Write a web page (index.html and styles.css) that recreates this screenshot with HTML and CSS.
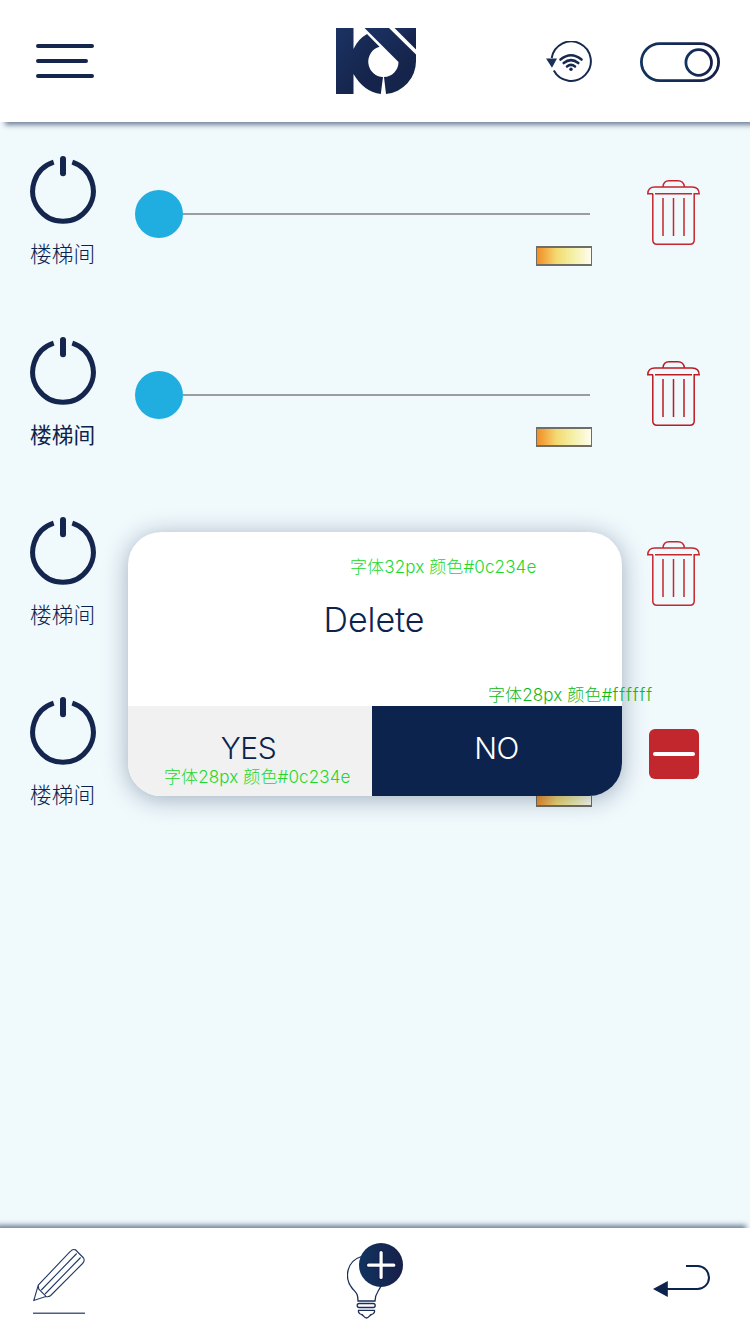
FILE: index.html
```html
<!DOCTYPE html>
<html lang="zh-CN">
<head>
<meta charset="utf-8">
<title>Lights</title>
<link rel="stylesheet" href="styles.css">
</head>
<body>
<svg class="defs" width="0" height="0" aria-hidden="true">
  <defs>
    <linearGradient id="navy" x1="0" y1="0" x2="1" y2="1"><stop offset="0" stop-color="#1b3364"/><stop offset=".7" stop-color="#15244a"/></linearGradient>
    <linearGradient id="navy-h" x1="0" y1="0" x2="1" y2="0"><stop offset="0" stop-color="#11335f"/><stop offset="1" stop-color="#172049"/></linearGradient>
    <symbol id="power" viewBox="0 0 66 70">
      <path d="M23.700 7.200A30.300 30.300 0 1 0 42.300 7.200" fill="none" stroke="#14254e" stroke-width="5"/>
      <path d="M33 4V18.300" stroke="#14254e" stroke-width="6" stroke-linecap="round"/>
    </symbol>
    <symbol id="trash" viewBox="0 0 53 66">
      <path d="M16 6.800Q16.500 .8 22 .8H31Q36.500 .8 37.500 6.800M6 13.800H.8Q.8 7 8 7H45Q52.200 7 52.200 13.800H47.200V60Q47.200 64.200 43 64.200H10Q5.800 64.200 5.800 60V13.800M8 13.800H45M16 18V56M26.500 18V56M37 18V56" fill="none" stroke="currentColor" stroke-width="1.500"/>
    </symbol>
  </defs>
</svg>
<div class="screen">
  <header class="topbar">
    <svg class="menu" width="60" height="36" viewBox="0 0 60 36"><path d="M2 3H56M2 18H50M2 33H56" stroke="#14254e" stroke-width="4" stroke-linecap="round"/></svg>
    <svg class="logo" width="80" height="66" viewBox="0 0 80 66"><g fill="url(#navy)"><path d="M0 0H17.500V21Q22 11 31 6L43.500 18.800A15.400 15.400 0 0 0 47 49L44.800 66Q28 64 17.500 46V66H0Z"/><path d="M28.500 0H53L80 26.500V33A33 33 0 0 1 50 66L48 49A15 15 0 0 0 62.500 34Z"/><path d="M58.500 0H80V21.500Z"/></g></svg>
    <svg class="sync" width="48" height="44" viewBox="0 0 48 44"><g fill="none" stroke="#17294f" stroke-width="2"><path d="M5.700 17A19.700 19.700 0 1 1 7.800 29.500"/><path d="M14.500 18.500Q25 10 35.500 18.500M17.700 22Q25 16.300 32.300 22M21 25.400Q25 22.200 29 25.400" stroke-width="2.600" stroke-linecap="round"/></g><path d="M0 17.500H11L6 26.800Z" fill="#1b2f5a"/><circle cx="25" cy="28.200" r="1.700" fill="#17294f"/></svg>
    <svg class="toggle" width="80" height="40" viewBox="0 0 80 40"><g fill="none" stroke="url(#navy-h)" stroke-width="2.800"><rect x="1.400" y="1.600" width="77.200" height="37" rx="18.500"/><circle cx="58.700" cy="20.500" r="12.800"/></g></svg>
  </header>

  <main class="list">
    <section class="row row-first">
      <div class="device"><svg width="66" height="70"><use href="#power"/></svg><span class="name">楼梯间</span></div>
      <div class="slider"><div class="track"><i class="knob"></i><i class="line"></i></div><i class="warmth"></i></div>
      <svg class="trash" width="53" height="66"><use href="#trash"/></svg>
    </section>
    <section class="row row-active">
      <div class="device"><svg width="66" height="70"><use href="#power"/></svg><span class="name">楼梯间</span></div>
      <div class="slider"><div class="track"><i class="knob"></i><i class="line"></i></div><i class="warmth"></i></div>
      <svg class="trash" width="53" height="66"><use href="#trash"/></svg>
    </section>
    <section class="row">
      <div class="device"><svg width="66" height="70"><use href="#power"/></svg><span class="name">楼梯间</span></div>
      <div class="slider"><div class="track"><i class="knob"></i><i class="line"></i></div><i class="warmth"></i></div>
      <svg class="trash" width="53" height="66"><use href="#trash"/></svg>
    </section>
    <section class="row">
      <div class="device"><svg width="66" height="70"><use href="#power"/></svg><span class="name">楼梯间</span></div>
      <div class="slider"><div class="track"><i class="knob"></i><i class="line"></i></div><i class="warmth"></i></div>
      <div class="minus"><i></i></div>
    </section>
  </main>

  <footer class="bottombar">
    <svg class="edit" width="53" height="68" viewBox="0 0 54 68" preserveAspectRatio="none"><g fill="none" stroke="#203866" stroke-width="1.100"><path d="M.8 52.500L5.400 37L38 3.500Q40.500 .6 43.500 2L51.300 9.500Q53.300 12.500 50.500 15.500L18 47.500Q16 49.300 13 48.500ZM5.400 37L5.800 41L12.500 47.500L13 48.500M8.500 42L44.500 5.500M12.300 46L48.500 9.500M43 1.500L51.500 10"/></g><path d="M0 65.200H53" stroke="#4c5f86" stroke-width="1.500"/></svg>
    <svg class="add" width="58" height="78" viewBox="0 0 58 78"><g fill="none" stroke="#1a2e5b" stroke-width="1.300"><path d="M14.500 13.500C-.5 18-3 35 5 45C9 50 11 50 11 58H28C28 50 31.500 49 34.500 42"/><rect x="10.200" y="60.500" width="18" height="4" rx="2"/><path d="M11.500 67.300H27.500Q28 70.300 24.500 71.500C22.500 72 22 75 19.500 75S16.500 72 14.500 71.500Q11 70.300 11.500 67.300Z"/></g><circle cx="34" cy="22" r="22" fill="url(#navy-h)"/><path d="M34.100 9.500V34.500M21.600 22.200H46.800" stroke="#101f47" stroke-width="5" stroke-linecap="round"/><path d="M34.100 9.500V34.500M21.600 22.200H46.800" stroke="#fff" stroke-width="3.200" stroke-linecap="round"/></svg>
    <svg class="back" width="58" height="34" viewBox="0 0 58 34"><path d="M33 2H44.500A11.500 11.500 0 0 1 44.500 25H13" fill="none" stroke="#0c234e" stroke-width="2"/><path d="M0 25L14.800 17V33Z" fill="#0c234e"/></svg>
  </footer>

  <div class="dialog">
    <div class="dialog-body">Delete</div>
    <div class="actions"><div class="yes">YES</div><div class="no">NO</div></div>
    <span class="note note-title">字体32px 颜色#0c234e</span>
    <span class="note note-no">字体28px 颜色#<span class="wide">ffffff</span></span>
    <span class="note note-yes">字体28px 颜色#0c234e</span>
  </div>
</div>
</body>
</html>
```

FILE: styles.css
```css
* { box-sizing: border-box; }
body { margin: 0; font-family: Inter, "Noto Sans CJK SC", sans-serif; font-weight: 300; color: #0c234e; }
svg { display: block; flex: none; }
i { display: block; }
.defs { position: absolute; }
.screen { position: relative; display: flex; flex-direction: column; width: 750px; height: 1334px; overflow: hidden; background: #f0f9fc; }

.topbar { display: flex; align-items: flex-start; height: 122px; padding-left: 36px; background: #fff; box-shadow: 5px 3px 5px rgba(12, 35, 78, .55); }
.menu { margin-top: 43px; }
.logo { margin: 28px 0 0 240px; }
.sync { margin: 41px 0 0 130px; }
.toggle { margin: 42px 0 0 46px; }

.list { flex: 1; padding: 33px 0 0 30px; }
.row { display: grid; grid-template-columns: 105px 512px 53px; height: 180px; }
.row-first { height: 181px; }
.row-active .name { font-weight: 400; }
.row-active .trash { color: #bd1a21; }
.name { display: block; height: 32px; margin-top: 13px; font-size: 21.700px; line-height: 32px; white-space: nowrap; }
.slider { width: 457px; padding-top: 35px; }
.track { display: flex; align-items: center; height: 48px; }
.knob { width: 48px; height: 48px; border-radius: 50%; background: #20addf; }
.line { width: 407px; height: 2px; background: #9b9da0; }
.warmth { width: 56px; height: 20px; margin: 8px 0 0 401px; border: solid #6f6d66; border-width: 2px 1px; background: linear-gradient(90deg, #f18f22 0, #f4b14b 18%, #f3da70 36%, #f4efa4 65%, #fffdee 100%); }
.trash { margin-top: 25px; color: #c4272d; }
.minus { display: flex; align-items: center; justify-content: center; width: 50px; height: 50px; margin: 33px 0 0 2px; border-radius: 6px; background: #c1272d; }
.minus i { width: 42px; height: 4px; border-radius: 2px; background: #fff; }

.bottombar { display: flex; align-items: flex-start; height: 106px; padding-left: 33px; background: #fff; box-shadow: -4px -3px 5px rgba(12, 35, 78, .55); }
.edit { margin-top: 20px; }
.add { margin: 15px 0 0 261px; }
.back { margin: 36px 0 0 248px; }

.dialog { position: absolute; top: 532px; left: 128px; width: 494px; height: 264px; border-radius: 33px; background: #fff; box-shadow: 0 3px 25px rgba(12, 35, 78, .35); }
.dialog-body { display: flex; align-items: center; justify-content: center; height: 174px; padding-right: 2px; font-size: 34px; letter-spacing: -.1px; }
.actions { display: grid; grid-template-columns: 244px 250px; height: 90px; overflow: hidden; border-radius: 0 0 33px 33px; font-size: 30px; line-height: 84px; letter-spacing: -.5px; text-align: center; }
.yes { padding-right: 3px; background: #f1f1f1; }
.no { padding-right: 1px; background: #0c234e; color: #fff; }
.note { position: absolute; font-size: 17px; line-height: 24px; letter-spacing: .12px; color: #20d82b; white-space: pre; }
.note-title { top: 23px; left: 222px; }
.note-no { top: 151px; left: 360px; color: #10b818; }
.note-yes { top: 233px; left: 36px; }
.wide { letter-spacing: 1.400px; }
```
